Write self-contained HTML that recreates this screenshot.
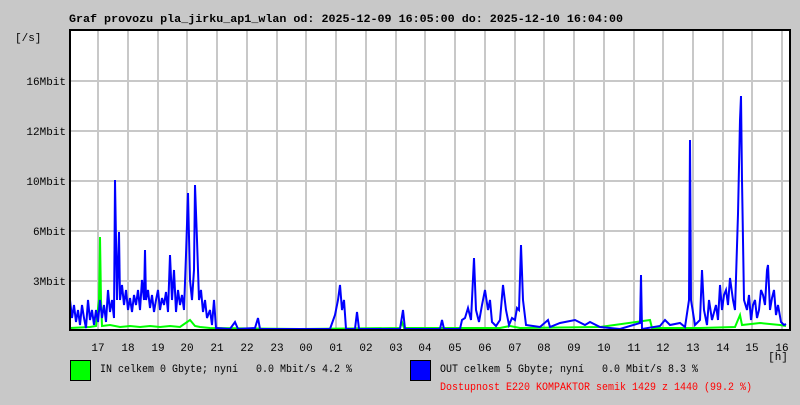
<!DOCTYPE html>
<html><head><meta charset="utf-8"><style>
html,body{margin:0;padding:0;background:#c8c8c8;}
svg text{font-family:"Liberation Mono","DejaVu Sans Mono",monospace;font-size:11px;white-space:pre;}
</style></head><body>
<svg width="800" height="400" xmlns="http://www.w3.org/2000/svg" xml:space="preserve">
<rect width="800" height="400" fill="#c8c8c8"/>
<text x="69" y="22" font-weight="bold" font-size="12" textLength="554" lengthAdjust="spacingAndGlyphs">Graf provozu pla_jirku_ap1_wlan od: 2025-12-09 16:05:00 do: 2025-12-10 16:04:00</text>
<rect x="70" y="30" width="720" height="300" fill="#fff"/>
<g stroke="#c8c8c8" stroke-width="2">
<line x1="70" y1="81" x2="790" y2="81"/><line x1="70" y1="131" x2="790" y2="131"/><line x1="70" y1="181" x2="790" y2="181"/><line x1="70" y1="231" x2="790" y2="231"/><line x1="70" y1="281" x2="790" y2="281"/>
<line x1="98" y1="30" x2="98" y2="330"/><line x1="128" y1="30" x2="128" y2="330"/><line x1="158" y1="30" x2="158" y2="330"/><line x1="187" y1="30" x2="187" y2="330"/><line x1="217" y1="30" x2="217" y2="330"/><line x1="247" y1="30" x2="247" y2="330"/><line x1="277" y1="30" x2="277" y2="330"/><line x1="306" y1="30" x2="306" y2="330"/><line x1="336" y1="30" x2="336" y2="330"/><line x1="366" y1="30" x2="366" y2="330"/><line x1="396" y1="30" x2="396" y2="330"/><line x1="425" y1="30" x2="425" y2="330"/><line x1="455" y1="30" x2="455" y2="330"/><line x1="485" y1="30" x2="485" y2="330"/><line x1="515" y1="30" x2="515" y2="330"/><line x1="544" y1="30" x2="544" y2="330"/><line x1="574" y1="30" x2="574" y2="330"/><line x1="604" y1="30" x2="604" y2="330"/><line x1="634" y1="30" x2="634" y2="330"/><line x1="663" y1="30" x2="663" y2="330"/><line x1="693" y1="30" x2="693" y2="330"/><line x1="723" y1="30" x2="723" y2="330"/><line x1="752" y1="30" x2="752" y2="330"/><line x1="782" y1="30" x2="782" y2="330"/>
</g>
<polyline fill="none" stroke="#00ff00" stroke-width="2" points="70,328 90,327 96,326 99,300 100,237 101,300 102,326 110,325 120,327 130,326 140,327 150,326 160,327 170,326 180,327 190,320 195,326 200,327 210,328 300,329 400,328 402,322 404,328 500,328 510,326 520,328 600,327 650,320 652,328 700,328 735,327 740,315 742,325 760,323 780,325 786,326"/>
<polyline fill="none" stroke="#0000ff" stroke-width="2" points="70,300 72,318 74,305 76,322 78,310 80,325 82,305 84,318 86,328 88,300 90,320 92,310 94,325 96,310 98,322 100,300 102,318 104,305 106,322 108,290 110,312 112,300 114,318 115,180 116,240 117,300 119,232 120,300 122,285 124,305 126,290 128,310 130,298 132,312 134,295 136,305 138,290 140,310 142,280 144,300 145,250 146,300 148,290 150,308 152,295 154,312 156,300 158,290 160,310 162,298 164,305 166,292 168,312 170,255 172,300 174,270 176,312 178,290 180,305 182,295 184,310 186,255 188,193 190,280 192,300 194,270 195,185 197,240 199,300 201,290 203,312 205,300 207,318 210,310 212,325 214,300 216,328 230,329 235,322 238,329 255,328 258,318 260,329 330,329 335,315 338,300 340,285 342,310 344,300 346,329 355,329 357,312 359,329 400,329 403,310 405,329 440,329 442,320 444,329 460,329 462,320 465,318 468,308 471,320 474,258 476,310 479,322 482,305 485,290 488,310 490,300 492,322 496,326 500,320 503,285 506,310 509,325 512,318 515,320 517,308 519,310 521,245 523,300 526,325 540,327 548,320 550,327 560,323 575,320 585,325 590,322 600,327 620,329 640,323 641,275 642,329 660,326 665,320 670,325 680,323 685,327 689,300 690,140 691,300 695,325 700,320 702,270 704,310 707,325 709,300 712,320 716,305 718,320 720,285 722,310 724,295 726,290 728,305 730,278 733,300 735,310 738,214 740,120 741,96 742,180 744,300 747,310 749,295 751,320 753,305 755,300 757,318 759,310 761,290 763,295 765,305 767,270 768,265 770,310 772,298 774,290 776,315 778,305 781,322 784,325 786,324"/>
<rect x="70" y="30" width="720" height="300" fill="none" stroke="#000" stroke-width="2"/>
<text x="15" y="41">[/s]</text>
<g text-anchor="end"><text x="66" y="85">16Mbit</text><text x="66" y="135">12Mbit</text><text x="66" y="185">10Mbit</text><text x="66" y="235">6Mbit</text><text x="66" y="285">3Mbit</text></g>
<g text-anchor="middle"><text x="98" y="351">17</text><text x="128" y="351">18</text><text x="158" y="351">19</text><text x="187" y="351">20</text><text x="217" y="351">21</text><text x="247" y="351">22</text><text x="277" y="351">23</text><text x="306" y="351">00</text><text x="336" y="351">01</text><text x="366" y="351">02</text><text x="396" y="351">03</text><text x="425" y="351">04</text><text x="455" y="351">05</text><text x="485" y="351">06</text><text x="515" y="351">07</text><text x="544" y="351">08</text><text x="574" y="351">09</text><text x="604" y="351">10</text><text x="634" y="351">11</text><text x="663" y="351">12</text><text x="693" y="351">13</text><text x="723" y="351">14</text><text x="752" y="351">15</text><text x="782" y="351">16</text><text x="778" y="360">[h]</text></g>
<rect x="70.5" y="360.5" width="20" height="20" fill="#00ff00" stroke="#000"/>
<text x="100" y="372" textLength="252" lengthAdjust="spacingAndGlyphs">IN celkem 0 Gbyte; nyní   0.0 Mbit/s 4.2 %</text>
<rect x="410.5" y="360.5" width="20" height="20" fill="#0000ff" stroke="#000"/>
<text x="440" y="372" textLength="258" lengthAdjust="spacingAndGlyphs">OUT celkem 5 Gbyte; nyní   0.0 Mbit/s 8.3 %</text>
<text x="440" y="390" fill="#ff0000" textLength="312" lengthAdjust="spacingAndGlyphs">Dostupnost E220 KOMPAKTOR semik 1429 z 1440 (99.2 %)</text>
</svg>
</body></html>
